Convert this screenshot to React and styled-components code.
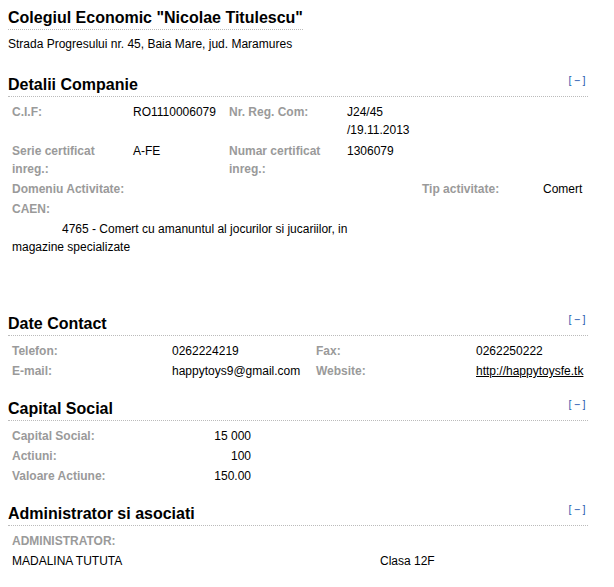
import React from 'react'
import styled, { createGlobalStyle } from 'styled-components'

const GlobalStyle = createGlobalStyle`
  body {
    margin: 8px;
    background: #fff;
    font-family: "Liberation Sans", Arial, sans-serif;
    font-size: 12px;
    color: #000;
  }
`

const Page = styled.div`
  width: 580px;
`

const Title = styled.h1`
  display: inline-block;
  margin: 0;
  font-size: 16px;
  font-weight: bold;
  line-height: 20px;
  padding-bottom: 1px;
  border-bottom: 1px dotted #bbb;
`

const Address = styled.div`
  margin-top: 7px;
  line-height: 14px;
`

const Section = styled.section`
  margin-top: ${p => p.$gap || 17}px;
`

const SectionHead = styled.div`
  display: flex;
  justify-content: space-between;
  align-items: flex-start;
  border-bottom: 1px dotted #bbb;
`

const SectionTitle = styled.h2`
  margin: 0;
  font-size: 16px;
  font-weight: bold;
  line-height: 22px;
`

const Toggle = styled.a`
  font-family: "DejaVu Sans Mono", "Liberation Mono", monospace;
  font-size: 10px;
  line-height: 13px;
  color: #2a5db0;
  letter-spacing: 1px;
  cursor: pointer;
`

const Body = styled.div`
  padding: 5px 0 0 4px;
`

const Row = styled.div`
  display: grid;
  grid-template-columns: ${p => p.$cols};
  padding: 1px 0;
  line-height: 18px;
`

const Label = styled.div`
  color: #9a9a9a;
  font-weight: bold;
`

const Value = styled.div`
  text-align: ${p => (p.$right ? 'right' : 'left')};
`

const Link = styled.a`
  color: #000;
  text-decoration: underline;
`

const Description = styled.div`
  width: 380px;
  text-indent: 50px;
  line-height: 18px;
  padding: 1px 0;
`

const Admin = styled.div`
  color: #000;
`

function Heading({ children }) {
  return (
    <SectionHead>
      <SectionTitle>{children}</SectionTitle>
      <Toggle>[−]</Toggle>
    </SectionHead>
  )
}

const detCols = '121px 96px 118px auto'
const contactCols = '160px 144px 160px auto'

export default function App() {
  return (
    <Page>
      <GlobalStyle />
      <Title>Colegiul Economic "Nicolae Titulescu"</Title>
      <Address>Strada Progresului nr. 45, Baia Mare, jud. Maramures</Address>

      <Section $gap={23}>
        <Heading>Detalii Companie</Heading>
        <Body>
          <Row $cols={detCols}>
            <Label>C.I.F:</Label>
            <Value>RO1110006079</Value>
            <Label>Nr. Reg. Com:</Label>
            <Value>J24/45<br />/19.11.2013</Value>
          </Row>
          <Row $cols={detCols} style={{ paddingTop: 2 }}>
            <Label>Serie certificat inreg.:</Label>
            <Value>A-FE</Value>
            <Label>Numar certificat inreg.:</Label>
            <Value>1306079</Value>
          </Row>
          <Row $cols="410px 121px auto">
            <Label>Domeniu Activitate:</Label>
            <Label>Tip activitate:</Label>
            <Value>Comert</Value>
          </Row>
          <Row $cols="1fr">
            <Label>CAEN:</Label>
          </Row>
          <Description>
            4765 - Comert cu amanuntul al jocurilor si jucariilor, in magazine specializate
          </Description>
        </Body>
      </Section>

      <Section $gap={56}>
        <Heading>Date Contact</Heading>
        <Body>
          <Row $cols={contactCols}>
            <Label>Telefon:</Label>
            <Value>0262224219</Value>
            <Label>Fax:</Label>
            <Value>0262250222</Value>
          </Row>
          <Row $cols={contactCols}>
            <Label>E-mail:</Label>
            <Value>happytoys9@gmail.com</Value>
            <Label>Website:</Label>
            <Value><Link href="#">http://happytoysfe.tk</Link></Value>
          </Row>
        </Body>
      </Section>

      <Section>
        <Heading>Capital Social</Heading>
        <Body>
          <Row $cols="160px 79px">
            <Label>Capital Social:</Label>
            <Value $right>15 000</Value>
          </Row>
          <Row $cols="160px 79px">
            <Label>Actiuni:</Label>
            <Value $right>100</Value>
          </Row>
          <Row $cols="160px 79px">
            <Label>Valoare Actiune:</Label>
            <Value $right>150.00</Value>
          </Row>
        </Body>
      </Section>

      <Section>
        <Heading>Administrator si asociati</Heading>
        <Body>
          <Row $cols="1fr">
            <Label>ADMINISTRATOR:</Label>
          </Row>
          <Row $cols="368px auto">
            <Admin>MADALINA TUTUTA</Admin>
            <Value>Clasa 12F</Value>
          </Row>
        </Body>
      </Section>
    </Page>
  )
}
